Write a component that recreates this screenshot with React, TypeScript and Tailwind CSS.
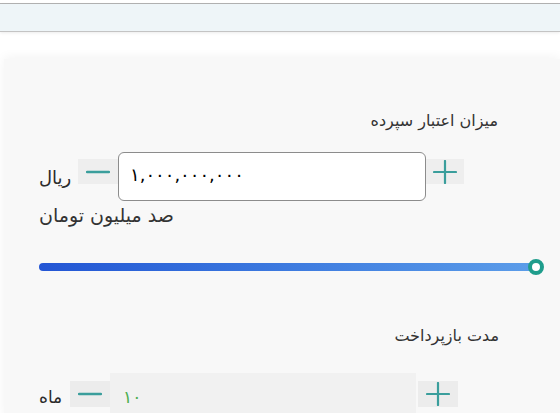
import React from "react";

function Minus() {
  return (
    <svg width="24" height="4" viewBox="0 0 24 4">
      <line x1="1" y1="2" x2="23" y2="2" stroke="#3a9e9c" strokeWidth="2.5" strokeLinecap="round" />
    </svg>
  );
}

function Plus() {
  return (
    <svg width="24" height="24" viewBox="0 0 24 24">
      <line x1="1" y1="12" x2="23" y2="12" stroke="#3a9e9c" strokeWidth="2.2" strokeLinecap="round" />
      <line x1="12" y1="1" x2="12" y2="23" stroke="#3a9e9c" strokeWidth="2.2" strokeLinecap="round" />
    </svg>
  );
}

export default function App() {
  return (
    <div className="w-[560px] h-[413px] overflow-hidden bg-white text-[#2b2b2b] font-['DejaVu_Sans',sans-serif]">
      <div className="h-[4px] bg-white border-b border-[#b3b3b3]" />
      <div className="h-[28px] bg-[#eef5f8] border-b border-[#c4c4c4] shadow-[0_1px_3px_rgba(0,0,0,0.08)]" />
      <div className="h-[27px]" />

      <div className="ml-[4px] w-[556px] h-[360px] bg-[#f8f8f8] shadow-[0_-2px_10px_rgba(0,0,0,0.05)] pt-[50px] pl-[35px]">
        <div dir="rtl" className="pr-[62px] text-[16px] leading-[24px] text-[#333]">
          میزان اعتبار سپرده
        </div>

        <div className="mt-[19px] flex items-start">
          <div dir="rtl" className="w-[39px] mt-[14px] text-[18px] leading-[24px] text-left">
            ریال
          </div>
          <div className="mt-[7px] w-[40px] h-[25px] bg-[#eeeeee] flex items-center justify-center">
            <Minus />
          </div>
          <div className="w-[308px] h-[49px] bg-white border border-[#8c8c8c] rounded-[6px] flex items-center pl-[11px] pb-[4px] text-[18px] text-black">
            ۱,۰۰۰,۰۰۰,۰۰۰
          </div>
          <div className="mt-[7px] w-[38px] h-[25px] bg-[#eeeeee] flex items-center justify-center">
            <Plus />
          </div>
        </div>

        <div dir="rtl" className="mt-[2px] w-[141px] text-[19px] leading-[24px] text-left text-[#333]">
          صد میلیون تومان
        </div>

        <div className="mt-[36px] relative w-[497px] h-[8px] rounded-full bg-gradient-to-r from-[#2355d4] to-[#5c9de9]">
          <div className="absolute right-[-8px] top-[-4px] w-[16px] h-[16px] rounded-full bg-white border-[4px] border-[#1f9d8c]" />
        </div>

        <div dir="rtl" className="mt-[53px] pr-[61px] text-[16px] leading-[24px] text-[#333]">
          مدت بازپرداخت
        </div>

        <div className="mt-[25px] flex items-start">
          <div dir="rtl" className="w-[31px] mt-[12px] text-[17px] leading-[24px] text-left">
            ماه
          </div>
          <div className="mt-[8px] w-[40px] h-[26px] bg-[#ececec] flex items-center justify-center">
            <Minus />
          </div>
          <div className="w-[306px] h-[49px] bg-[#f1f1f1] flex items-center pl-[13px] text-[17px] text-[#4caf50]">
            ۱۰
          </div>
          <div className="ml-[2px] mt-[8px] w-[40px] h-[26px] bg-[#ececec] flex items-center justify-center">
            <Plus />
          </div>
        </div>
      </div>
    </div>
  );
}
